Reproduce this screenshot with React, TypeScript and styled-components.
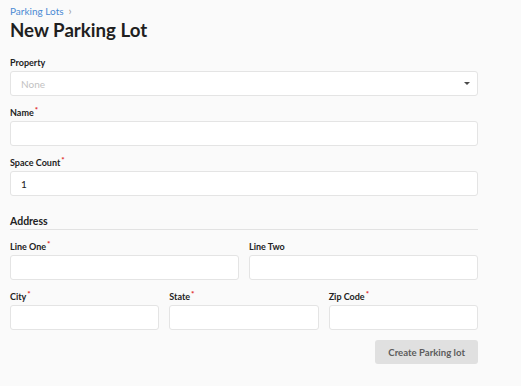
import styled, { createGlobalStyle } from 'styled-components';

const GlobalStyle = createGlobalStyle`
    body {
        margin: 0;
        background: #fafafa;
        font-family: Lato, "Noto Sans", sans-serif;
        color: #222222;
    }
`

const Page = styled.main`
    padding: 4px 10px 0 10px;
    width: 468px;
`

const Breadcrumb = styled.nav`
    display: flex;
    align-items: center;
    gap: 5px;
    font-size: 10px;
    line-height: 14px;
`

const Crumb = styled.a`
    color: #4a8ad4;
    text-decoration: none;
`

const Chevron = styled.span`
    color: #9a9a9a;
    font-size: 11px;
`

const Title = styled.h1`
    font-size: 18.7px;
    line-height: 24px;
    font-weight: 700;
    margin: 0 0 14px 0;
    color: #1f1f1f;
`

const Form = styled.form`
    display: flex;
    flex-direction: column;
`

const Field = styled.div`
    display: flex;
    flex-direction: column;
    margin-bottom: 10px;
    min-width: 0;
`

const Label = styled.label`
    font-size: 9px;
    line-height: 14px;
    font-weight: 700;
    margin-bottom: 1px;
    color: #222222;
`

const Required = styled.span`
    color: #e02424;
    font-size: 8px;
    vertical-align: top;
    margin-left: 1px;
    line-height: 9px;
`

const Input = styled.input`
    box-sizing: border-box;
    height: 25px;
    width: 100%;
    border: 1px solid #e4e4e4;
    border-radius: 3px;
    background: #ffffff;
    padding: 0 10px;
    font-family: Lato, sans-serif;
    font-size: 10px;
    color: #222222;
    outline: none;
`

const SelectBox = styled.div`
    box-sizing: border-box;
    height: 25px;
    border: 1px solid #e4e4e4;
    border-radius: 3px;
    background: #ffffff;
    padding: 0 7px 0 10px;
    display: flex;
    align-items: center;
    justify-content: space-between;
    font-size: 10px;
`

const Placeholder = styled.span`
    color: #c2c2c2;
`

const Caret = styled.span`
    width: 0;
    height: 0;
    border-left: 3px solid transparent;
    border-right: 3px solid transparent;
    border-top: 3px solid #4a4a4a;
`

const SectionTitle = styled.h2`
    font-size: 10.5px;
    line-height: 15px;
    font-weight: 700;
    margin: 8px 0 10px 0;
    padding: 0;
    border-bottom: 1px solid #e2e2e2;
    color: #222222;
`

const Row = styled.div<{ $cols: number }>`
    display: grid;
    grid-template-columns: repeat(${p => p.$cols}, 1fr);
    column-gap: 10px;
`

const Actions = styled.div`
    display: flex;
    justify-content: flex-end;
`

const Button = styled.button`
    height: 24px;
    padding: 0 13px;
    border: none;
    border-radius: 3px;
    background: #e0e0e0;
    color: #5c5c5c;
    font-family: Lato, sans-serif;
    font-weight: 700;
    font-size: 9.6px;
`

const Req = () => <Required>*</Required>

export default function App() {
    return (
        <>
            <GlobalStyle />
            <Page>
                <Breadcrumb>
                    <Crumb href="#">Parking Lots</Crumb>
                    <Chevron>›</Chevron>
                </Breadcrumb>
                <Title>New Parking Lot</Title>
                <Form>
                    <Field>
                        <Label>Property</Label>
                        <SelectBox>
                            <Placeholder>None</Placeholder>
                            <Caret />
                        </SelectBox>
                    </Field>
                    <Field>
                        <Label>Name<Req /></Label>
                        <Input />
                    </Field>
                    <Field>
                        <Label>Space Count<Req /></Label>
                        <Input defaultValue="1" />
                    </Field>
                    <SectionTitle>Address</SectionTitle>
                    <Row $cols={2}>
                        <Field>
                            <Label>Line One<Req /></Label>
                            <Input />
                        </Field>
                        <Field>
                            <Label>Line Two</Label>
                            <Input />
                        </Field>
                    </Row>
                    <Row $cols={3}>
                        <Field>
                            <Label>City<Req /></Label>
                            <Input />
                        </Field>
                        <Field>
                            <Label>State<Req /></Label>
                            <Input />
                        </Field>
                        <Field>
                            <Label>Zip Code<Req /></Label>
                            <Input />
                        </Field>
                    </Row>
                    <Actions>
                        <Button type="button">Create Parking lot</Button>
                    </Actions>
                </Form>
            </Page>
        </>
    )
}
